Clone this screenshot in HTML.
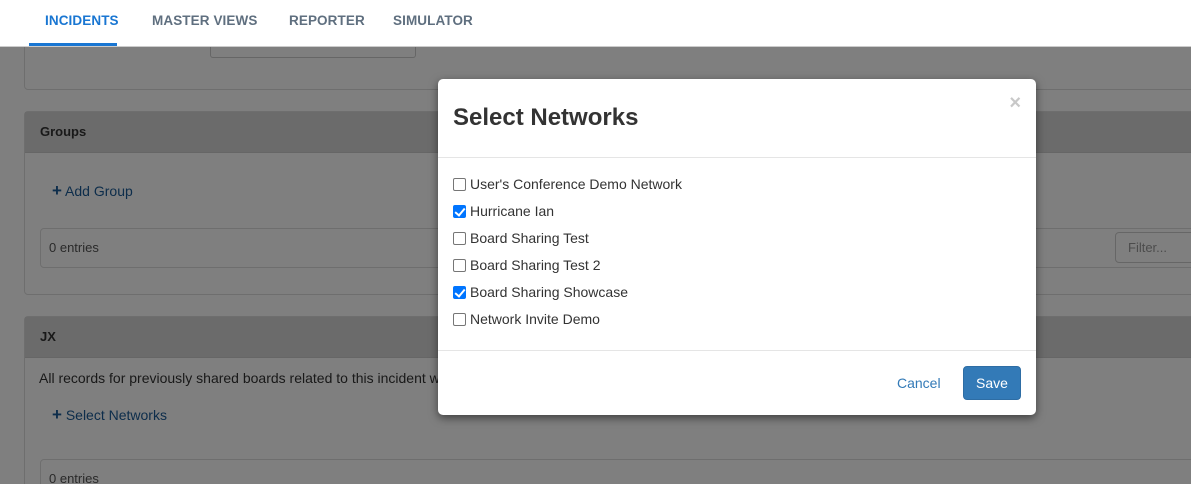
<!DOCTYPE html>
<html><head><style>
*{box-sizing:border-box;margin:0;padding:0}
html,body{width:1191px;height:484px;overflow:hidden}
body{font-family:"Liberation Sans",sans-serif;font-size:14px;color:#333;background:#fff;position:relative}
.nav{position:absolute;left:0;top:0;width:1191px;height:47px;background:#fff;border-bottom:1px solid #ccc;z-index:5}
.nav span{position:absolute;top:13px;font-size:13.5px;font-weight:bold;color:#5f6f7f;letter-spacing:.1px}
.ul{position:absolute;left:29px;top:43px;width:88px;height:3px;background:#1976d2}
.main{position:absolute;left:0;top:47px;width:1191px;height:437px;background:#fff;overflow:hidden}
.panel{position:absolute;left:24px;width:1190px;border:1px solid #ddd;border-radius:4px;background:#fff}
.ph{background:#d6d6d6;height:41px;padding:12px 15px;font-weight:bold;font-size:13px;color:#333;border-bottom:1px solid #ccc}
.box{position:absolute;left:40px;width:1160px;height:40px;border:1px solid #ddd;border-radius:4px;padding:11px 8px;font-size:13px;color:#555}
.link{position:absolute;color:#1a5a96;font-size:14px}
.link b{font-size:17px}
.overlay{position:absolute;left:0;top:47px;width:1191px;height:437px;background:rgba(0,0,0,.5);z-index:6}
.modal{position:absolute;left:438px;top:79px;width:598px;height:336px;background:#fff;border-radius:5px;box-shadow:0 3px 9px rgba(0,0,0,.5);z-index:7}
.mt{position:absolute;left:15px;top:25px;font-size:24px;font-weight:bold;color:#333}
.x{position:absolute;right:15px;top:13px;font-size:20px;font-weight:bold;color:#c8c8c8}
.hr{position:absolute;left:0;width:598px;height:1px;background:#e5e5e5}
.it{position:absolute;left:15px;font-size:14px;color:#333;display:flex;align-items:center}
.cb{width:13px;height:13px;border:1px solid #767676;border-radius:2px;margin-right:4px;background:#fff;position:relative}
.cb.on{background:#0075ff;border-color:#0075ff}
.cb.on:after{content:"";position:absolute;left:3px;top:0px;width:4px;height:8px;border:solid #fff;border-width:0 2px 2px 0;transform:rotate(40deg)}
.cancel{position:absolute;left:459px;top:296px;color:#337ab7;font-size:14px}
.save{position:absolute;left:525px;top:287px;width:58px;height:34px;background:#337ab7;border:1px solid #2e6da4;border-radius:4px;color:#fff;font-size:14px;text-align:center;line-height:32px}
</style></head><body>
<div class="nav">
<span style="left:45px;color:#1976d2">INCIDENTS</span>
<span style="left:152px">MASTER VIEWS</span>
<span style="left:289px">REPORTER</span>
<span style="left:393px">SIMULATOR</span>
<div class="ul"></div>
</div>
<div class="main">
<div class="panel" style="top:-10px;height:53px"><div style="position:absolute;left:185px;top:0;width:206px;height:20px;border:1px solid #ccc;border-top:none;border-radius:0 0 3px 3px"></div></div>
<div class="panel" style="top:64px;height:184px"><div class="ph">Groups</div></div>
<div class="link" style="left:52px;top:134px"><b>+</b> Add Group</div>
<div class="box" style="top:181px">0 entries</div>
<div style="position:absolute;left:1115px;top:185px;width:90px;height:31px;border:1px solid #ccc;border-radius:4px;padding:7px 12px;color:#999;font-size:13px;background:#fff">Filter...</div>
<div class="panel" style="top:269px;height:200px"><div class="ph">JX</div></div>
<div style="position:absolute;left:39px;top:323px;font-size:14px">All records for previously shared boards related to this incident will be kept.</div>
<div class="link" style="left:52px;top:358px"><b>+</b> Select Networks</div>
<div class="box" style="top:412px">0 entries</div>
</div>
<div class="overlay"></div>
<div class="modal">
<div class="mt">Select Networks</div>
<div class="x">×</div>
<div class="hr" style="top:78px"></div>
<div class="it" style="top:97px"><span class="cb"></span>User's Conference Demo Network</div>
<div class="it" style="top:124px"><span class="cb on"></span>Hurricane Ian</div>
<div class="it" style="top:151px"><span class="cb"></span>Board Sharing Test</div>
<div class="it" style="top:178px"><span class="cb"></span>Board Sharing Test 2</div>
<div class="it" style="top:205px"><span class="cb on"></span>Board Sharing Showcase</div>
<div class="it" style="top:232px"><span class="cb"></span>Network Invite Demo</div>
<div class="hr" style="top:271px"></div>
<div class="cancel">Cancel</div>
<div class="save">Save</div>
</div>
</body></html>
